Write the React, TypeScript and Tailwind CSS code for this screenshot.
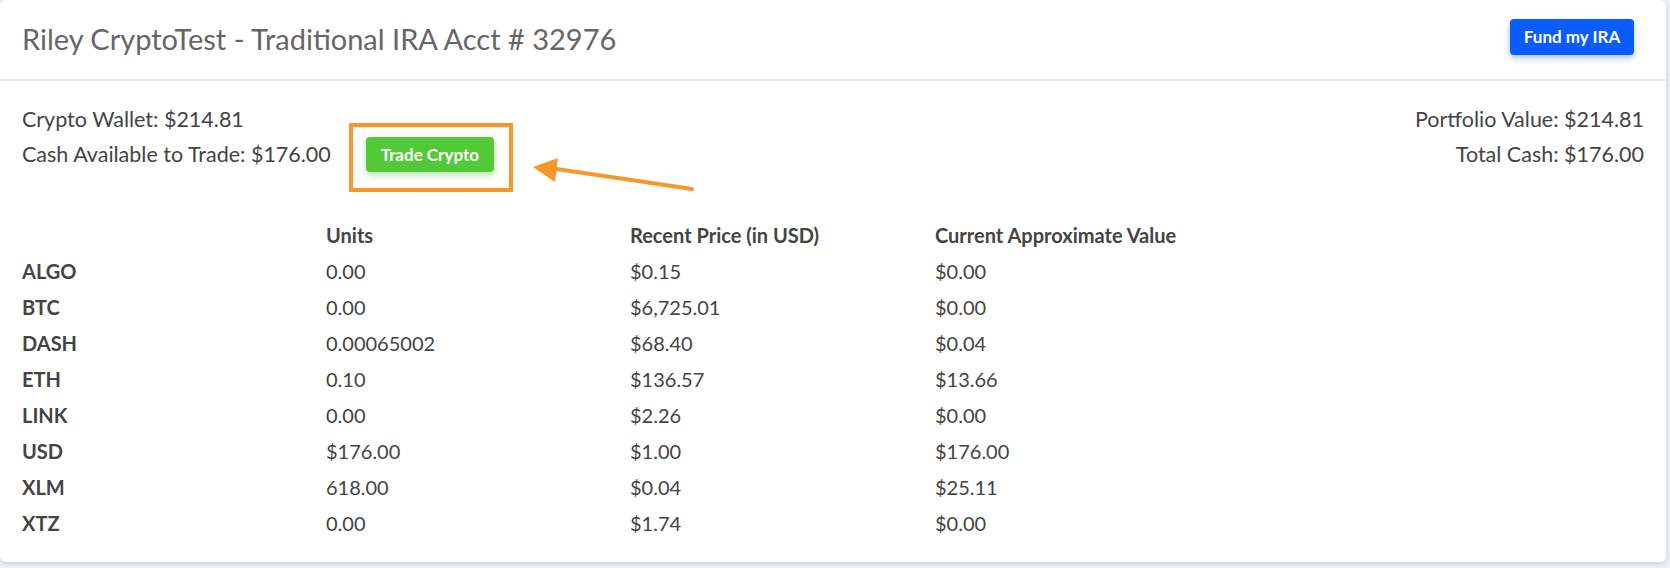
import React from "react";

const rows = [
  ["ALGO", "0.00", "$0.15", "$0.00"],
  ["BTC", "0.00", "$6,725.01", "$0.00"],
  ["DASH", "0.00065002", "$68.40", "$0.04"],
  ["ETH", "0.10", "$136.57", "$13.66"],
  ["LINK", "0.00", "$2.26", "$0.00"],
  ["USD", "$176.00", "$1.00", "$176.00"],
  ["XLM", "618.00", "$0.04", "$25.11"],
  ["XTZ", "0.00", "$1.74", "$0.00"],
];

export default function App() {
  return (
    <div
      className="w-[1670px] h-[568px] bg-[#eef1f6] overflow-hidden"
      style={{ fontFamily: "Lato, 'Noto Sans', sans-serif" }}
    >
      <div className="relative w-[1666px] h-[562px] bg-white rounded-[6px] shadow-[0_2px_5px_rgba(120,145,190,0.35)]">
        <div className="flex items-center justify-between h-[81px] border-b-2 border-[#e8e9eb] pl-[22px] pr-[32px]">
          <h1 className="text-[29px] text-[#666666] font-normal leading-none mb-[3px]">
            Riley CryptoTest - Traditional IRA Acct # 32976
          </h1>
          <button className="mb-[6px] h-[36px] w-[124px] rounded-[4px] bg-[#0a5cff] text-white font-bold text-[17px] shadow-[0_3px_7px_rgba(10,92,255,0.35)]">
            Fund my IRA
          </button>
        </div>

        <div className="px-[22px] pt-[21px] text-[#444444]">
          <div className="flex justify-between text-[21.5px] leading-[35px]">
            <div>
              <div>Crypto Wallet: $214.81</div>
              <div className="flex items-center">
                <span>Cash Available to Trade: $176.00</span>
                <button className="ml-[35px] h-[35px] w-[128px] rounded-[4px] bg-[#52c936] text-white font-bold text-[17px] leading-none shadow-[0_3px_7px_rgba(60,160,40,0.35)]">
                  Trade Crypto
                </button>
              </div>
            </div>
            <div className="text-right">
              <div>Portfolio Value: $214.81</div>
              <div>Total Cash: $176.00</div>
            </div>
          </div>

          <div className="mt-[45px] text-[20px]">
            <div className="grid grid-cols-[304px_304px_305px_1fr] h-[36px] items-center font-bold">
              <div></div>
              <div>Units</div>
              <div>Recent Price (in USD)</div>
              <div>Current Approximate Value</div>
            </div>
            {rows.map((r) => (
              <div
                key={r[0]}
                className="grid grid-cols-[304px_304px_305px_1fr] h-[36px] items-center"
              >
                <div className="font-bold">{r[0]}</div>
                <div>{r[1]}</div>
                <div>{r[2]}</div>
                <div>{r[3]}</div>
              </div>
            ))}
          </div>
        </div>

        <div className="absolute left-[349px] top-[123px] w-[164px] h-[69px] border-4 border-[#f9962a]"></div>
        <svg
          className="absolute left-[520px] top-[150px]"
          width="180"
          height="50"
          viewBox="0 0 180 50"
        >
          <line x1="172" y1="39" x2="30" y2="18" stroke="#f9962a" strokeWidth="4" strokeLinecap="round" />
          <polygon points="13,17 38,8 35,32" fill="#f9962a" />
        </svg>
      </div>
    </div>
  );
}
